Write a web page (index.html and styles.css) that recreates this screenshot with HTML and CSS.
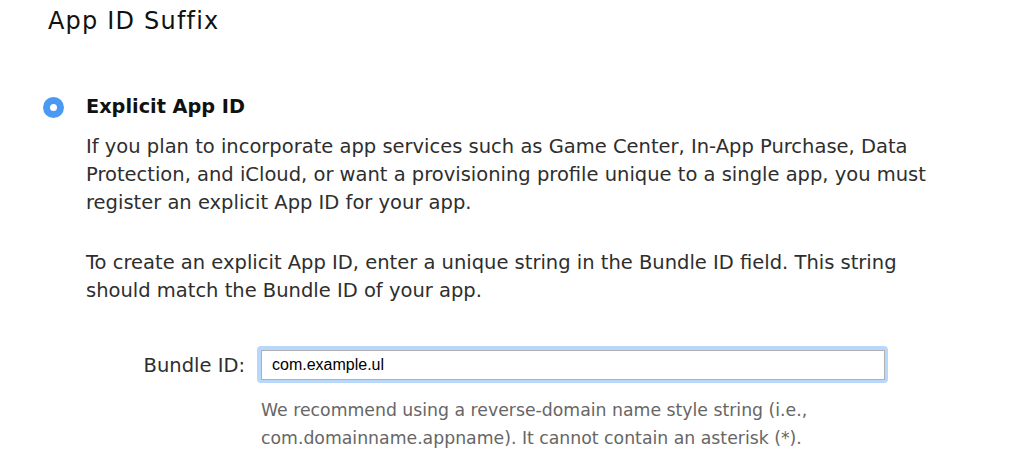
FILE: index.html
```html
<!DOCTYPE html>
<html>
<head>
<meta charset="utf-8">
<link rel="stylesheet" href="styles.css">
</head>
<body>
<div class="page">
  <h1 class="title">App ID Suffix</h1>
  <div class="option">
    <span class="radio"><span class="radio-dot"></span></span>
    <div class="option-body">
      <div class="option-title">Explicit App ID</div>
      <p class="desc">If you plan to incorporate app services such as Game Center, In-App Purchase, Data Protection, and iCloud, or want a provisioning profile unique to a single app, you must register an explicit App ID for your app.</p>
      <p class="desc">To create an explicit App ID, enter a unique string in the Bundle ID field. This string should match the Bundle ID of your app.</p>
    </div>
  </div>
  <div class="field">
    <label class="field-label">Bundle ID:</label>
    <div class="field-main">
      <div class="input-wrap"><div class="input">com.example.ul</div></div>
      <p class="hint">We recommend using a reverse-domain name style string (i.e., com.domainname.appname). It cannot contain an asterisk (*).</p>
    </div>
  </div>
</div>
</body>
</html>
```

FILE: styles.css
```css
html, body {
  margin: 0;
  padding: 0;
  background: #fff;
}
body {
  font-family: "DejaVu Sans", "Open Sans", sans-serif;
  color: #2e2e2e;
}
.page {
  padding: 0 0 0 48px;
  width: 976px;
  height: 476px;
  overflow: hidden;
}
.title {
  margin: 0;
  padding-top: 4px;
  font-family: "DejaVu Sans", sans-serif;
  font-weight: 400;
  font-size: 24px;
  line-height: 34px;
  letter-spacing: 1.2px;
  color: #111;
}
.option {
  display: flex;
  margin-top: 55px;
}
.radio {
  flex: none;
  width: 21px;
  height: 21px;
  border-radius: 50%;
  background: #4a9af4;
  display: flex;
  align-items: center;
  justify-content: center;
  margin: 4px 0 0 -5px;
}
.radio-dot {
  width: 7px;
  height: 7px;
  border-radius: 50%;
  background: #fff;
}
.option-body {
  margin-left: 22px;
}
.option-title {
  font-weight: 700;
  font-size: 19.3px;
  line-height: 28px;
  color: #111;
}
.desc {
  margin: 12px 0 32px;
  font-size: 19.5px;
  line-height: 28px;
  width: 862px;
}
.desc + .desc {
  margin-top: 0;
  margin-bottom: 0;
}
.field {
  display: flex;
  margin-top: 41px;
}
.field-label {
  width: 197px;
  text-align: right;
  font-size: 19.5px;
  line-height: 28px;
  padding-top: 6px;
}
.field-main {
  margin-left: 12px;
}
.input-wrap {
  width: 624px;
  padding: 4px 3px 3px 4px;
  border-radius: 4px;
  background: #b8d8fb;
}
.input {
  height: 28px;
  border: 1px solid #b0b0b0;
  background: #fff;
  font-family: "Liberation Sans", Arial, sans-serif;
  font-size: 16px;
  line-height: 28px;
  padding-left: 10px;
  color: #000;
}
.hint {
  margin: 13px 0 0 4px;
  font-size: 17.3px;
  line-height: 28px;
  color: #666;
  width: 620px;
}
```
